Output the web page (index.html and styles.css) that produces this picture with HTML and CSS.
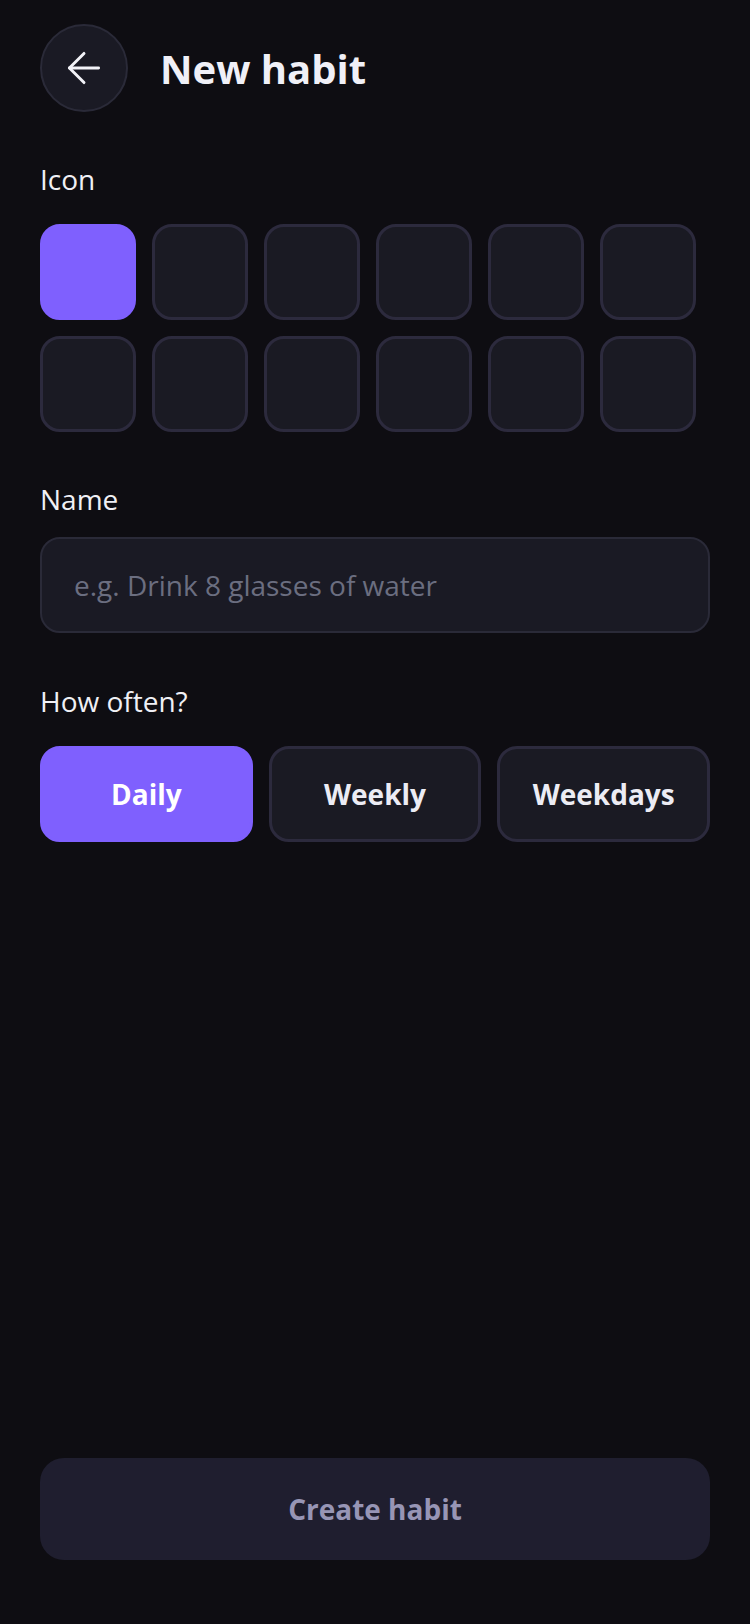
FILE: index.html
```html
<!DOCTYPE html>
<html>
<head>
<meta charset="utf-8">
<meta name="viewport" content="width=device-width, initial-scale=1.0">
<title>New habit</title>
<link rel="stylesheet" href="styles.css">
</head>
<body>
<div class="screen">
<div class="header">
<button class="back" aria-label="Back">
<svg width="50" height="50" viewBox="0 0 24 24" fill="none" stroke="#f2f2f7" stroke-width="1.4" stroke-linecap="round" stroke-linejoin="round"><path d="M19 12H5"/><path d="M12 5l-7 7 7 7"/></svg>
</button>
<h1 class="title">New habit</h1>
</div>

<div class="label label-icon">Icon</div>
<div class="icons">
<div class="tile selected"></div>
<div class="tile"></div>
<div class="tile"></div>
<div class="tile"></div>
<div class="tile"></div>
<div class="tile"></div>
<div class="tile"></div>
<div class="tile"></div>
<div class="tile"></div>
<div class="tile"></div>
<div class="tile"></div>
<div class="tile"></div>
</div>

<div class="label label-name">Name</div>
<input class="name-input" type="text" placeholder="e.g. Drink 8 glasses of water">

<div class="label label-often">How often?</div>
<div class="freq">
<button class="freq-btn active">Daily</button>
<button class="freq-btn">Weekly</button>
<button class="freq-btn">Weekdays</button>
</div>

<button class="create">Create habit</button>
</div>
</body>
</html>
```

FILE: styles.css
```css
* { box-sizing: border-box; }
html, body {
  margin: 0;
  background: #0e0d12;
}
body {
  font-family: "Open Sans", "Noto Sans", sans-serif;
  color: #f0f0f5;
}
button, input { font-family: inherit; }

.screen {
  min-height: 1624px;
  padding: 24px 40px 64px;
  display: flex;
  flex-direction: column;
}

.header {
  display: flex;
  align-items: center;
  height: 88px;
}
.back {
  width: 88px;
  height: 88px;
  border-radius: 50%;
  background: #1a1a24;
  border: 2px solid #2a2a38;
  display: flex;
  align-items: center;
  justify-content: center;
  padding: 0;
}
.title {
  margin: 0 0 0 32px;
  font-size: 40px;
  font-weight: 700;
  color: #f0f0f7;
}

.label {
  font-size: 28px;
  line-height: 40px;
}
.label-icon { margin-top: 47px; }
.label-name { margin-top: 47px; }
.label-often { margin-top: 48px; }

.icons {
  margin-top: 25px;
  display: grid;
  grid-template-columns: repeat(6, 96px);
  grid-auto-rows: 96px;
  gap: 16px;
}
.tile {
  border-radius: 20px;
  background: #1a1a23;
  border: 3px solid #2c2a3d;
}
.tile.selected {
  background: #7f60fe;
  border-color: #7f60fe;
}

.name-input {
  margin-top: 18px;
  height: 96px;
  width: 100%;
  border-radius: 20px;
  background: #1a1a24;
  border: 2px solid #2a2a38;
  padding: 0 32px;
  font-size: 28px;
  color: #f0f0f5;
  outline: none;
}
.name-input::placeholder { color: #6b6e80; }

.freq {
  margin-top: 25px;
  display: grid;
  grid-template-columns: repeat(3, 1fr);
  gap: 16px;
}
.freq-btn {
  height: 96px;
  border-radius: 20px;
  background: #1a1a23;
  border: 3px solid #2c2a3d;
  color: #ececf4;
  font-size: 28px;
  font-weight: 700;
}
.freq-btn.active {
  background: #7f60fe;
  border-color: #7f60fe;
  color: #fff;
}

.create {
  margin-top: auto;
  height: 102px;
  width: 100%;
  border-radius: 24px;
  background: #1f1e2f;
  border: none;
  color: #9795b5;
  font-size: 28px;
  font-weight: 700;
}
```
